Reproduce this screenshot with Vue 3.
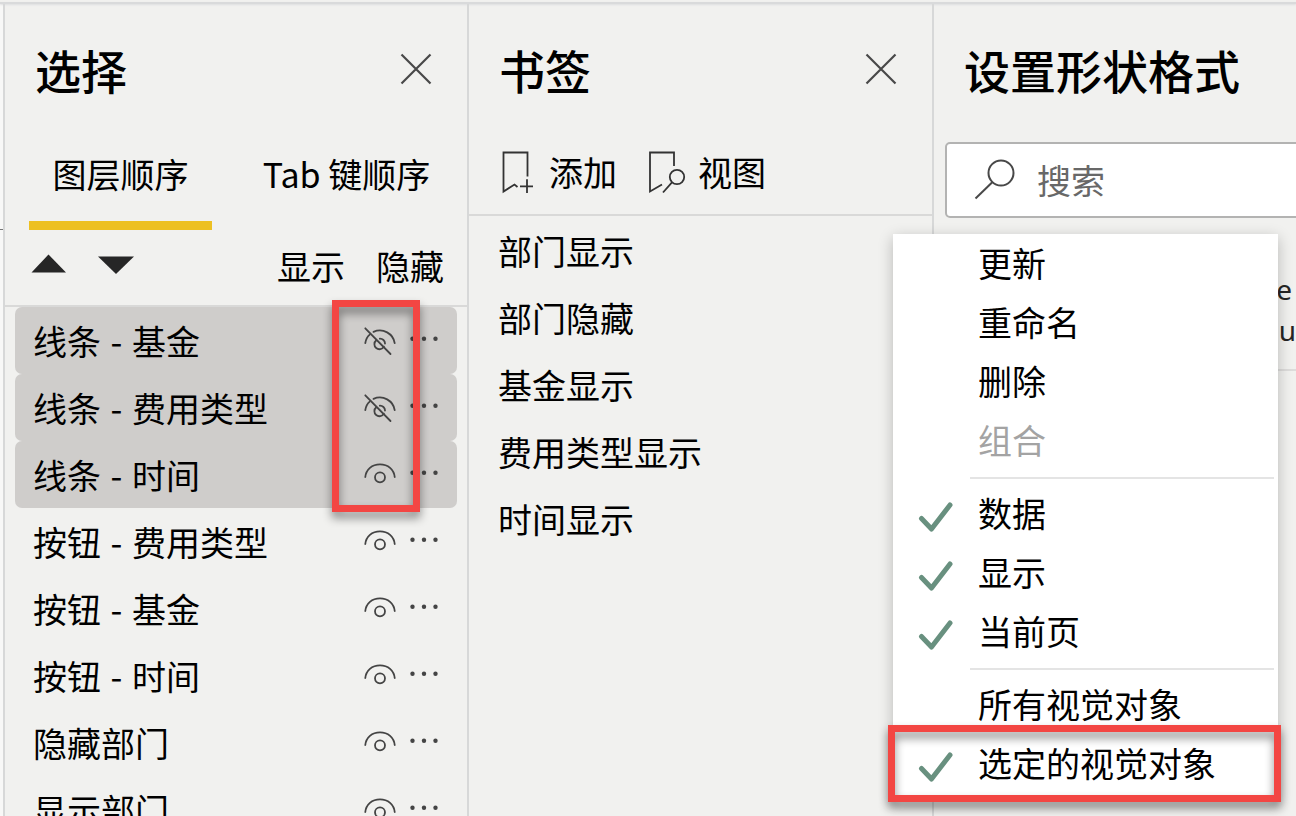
<script setup>
import { ref } from 'vue'

const layers = ref([
  { name: ['线条', '基金'], selected: true, hidden: true },
  { name: ['线条', '费用类型'], selected: true, hidden: true },
  { name: ['线条', '时间'], selected: true, hidden: false },
  { name: ['按钮', '费用类型'], selected: false, hidden: false },
  { name: ['按钮', '基金'], selected: false, hidden: false },
  { name: ['按钮', '时间'], selected: false, hidden: false },
  { name: ['隐藏部门'], selected: false, hidden: false },
  { name: ['显示部门'], selected: false, hidden: false }
])

const bookmarks = ['部门显示', '部门隐藏', '基金显示', '费用类型显示', '时间显示']

const menuGroups = [
  [
    { label: '更新' },
    { label: '重命名' },
    { label: '删除' },
    { label: '组合', disabled: true }
  ],
  [
    { label: '数据', checked: true },
    { label: '显示', checked: true },
    { label: '当前页', checked: true }
  ],
  [
    { label: '所有视觉对象' },
    { label: '选定的视觉对象', checked: true, marked: true }
  ]
]
</script>

<template>
  <div class="app">
    <div class="canvas-edge"><i class="canvas-line"></i></div>

    <section class="panel">
      <header class="panel-head">
        <h2>选择</h2>
        <button class="icon-btn" aria-label="关闭">
          <svg width="32" height="32" viewBox="0 0 32 32"><path d="M1.500 1.500 30.500 30.500M30.500 1.500 1.500 30.500" fill="none" stroke="#484848" stroke-width="2.200" /></svg>
        </button>
      </header>
      <div class="tabs" role="tablist">
        <button class="tab active" role="tab" aria-selected="true">图层顺序</button>
        <button class="tab" role="tab" aria-selected="false">Tab 键顺序</button>
      </div>
      <div class="order-bar">
        <button class="icon-btn" aria-label="上移">
          <svg width="36" height="20" viewBox="0 0 36 20"><path d="M0.500 18.500 17.500 0.500 35 18.500Z" fill="#262626" /></svg>
        </button>
        <button class="icon-btn" aria-label="下移">
          <svg width="36" height="20" viewBox="0 0 36 20"><path d="M0 2.500H36L18 20Z" fill="#262626" /></svg>
        </button>
        <button class="text-btn show-all">显示</button>
        <button class="text-btn">隐藏</button>
      </div>
      <div class="layer-area">
        <ul class="layers">
          <li v-for="layer in layers" :key="layer.name.join('-')" :class="{ selected: layer.selected }">
            <span class="layer-name">{{ layer.name[0] }}<template v-if="layer.name[1]"><span class="dash"> - </span>{{ layer.name[1] }}</template></span>
            <button class="icon-btn" :aria-label="layer.hidden ? '显示' : '隐藏'" @click="layer.hidden = !layer.hidden">
              <svg width="32" height="32" viewBox="0 0 32 32" fill="none" stroke="#444" stroke-width="1.800" stroke-linecap="round">
                <template v-if="layer.hidden">
                  <path d="M1.300 18.200C1.800 14.500 3.300 11.600 5.700 9.600" />
                  <path d="M9.500 6.800C19 2.800 29.300 8.500 30.700 18.200" />
                  <path d="M12.300 15.300A5 5 0 1 0 19.800 21.600" />
                  <path d="M15.800 13.600A5 5 0 0 1 21 18.600" />
                  <path d="M1.300 3.300 26.500 29" />
                </template>
                <template v-else>
                  <path d="M1.300 18C2 10.500 8 5.300 16 5.300S30 10.500 30.700 18" />
                  <circle cx="16" cy="18.300" r="5" />
                </template>
              </svg>
            </button>
            <button class="icon-btn more" aria-label="更多选项">
              <svg width="28" height="28" viewBox="0 0 28 28" fill="#444"><circle cx="2.500" cy="11.700" r="2.200" /><circle cx="14" cy="11.700" r="2.200" /><circle cx="25.500" cy="11.700" r="2.200" /></svg>
            </button>
          </li>
        </ul>
        <div class="callout eyes-callout"></div>
      </div>
    </section>

    <section class="panel">
      <header class="panel-head">
        <h2>书签</h2>
        <button class="icon-btn" aria-label="关闭">
          <svg width="32" height="32" viewBox="0 0 32 32"><path d="M1.500 1.500 30.500 30.500M30.500 1.500 1.500 30.500" fill="none" stroke="#484848" stroke-width="2.200" /></svg>
        </button>
      </header>
      <div class="bookmark-bar">
        <button class="text-btn">
          <svg width="34" height="44" viewBox="0 0 34 44" fill="none" stroke="#333" stroke-width="1.800"><path d="M26.500 26.500V2.500H2.500V41.500L13.500 34.500 16.500 37M19 36.300H32M26 29.300V43" /></svg>
          <span>添加</span>
        </button>
        <button class="text-btn view">
          <svg width="38" height="44" viewBox="0 0 38 44" fill="none" stroke="#333" stroke-width="1.800"><path d="M26 16V2.500H2V41.500L14 34.500M24.200 32.200 15 42.500" /><circle cx="29" cy="27" r="7.200" /></svg>
          <span>视图</span>
        </button>
      </div>
      <ul class="bookmarks">
        <li v-for="name in bookmarks" :key="name">{{ name }}</li>
      </ul>
    </section>

    <section class="panel format">
      <header class="panel-head">
        <h2>设置形状格式</h2>
      </header>
      <label class="search">
        <svg width="42" height="42" viewBox="0 0 42 42" fill="none" stroke="#484848" stroke-width="2"><circle cx="27" cy="15" r="12.500" /><path d="M18.500 24 1.500 40.500" /></svg>
        <input type="search" placeholder="搜索" aria-label="搜索" />
      </label>
      <p class="behind"><span>e</span><span>u</span></p>

      <div class="menu" role="menu">
        <div v-for="(group, g) in menuGroups" :key="g" class="group">
          <button
            v-for="item in group"
            :key="item.label"
            class="menu-item"
            role="menuitem"
            :disabled="item.disabled"
          >
            <span class="tick">
              <svg v-if="item.checked" width="36" height="32" viewBox="0 0 36 32"><path d="M3.500 17.500 13.500 28 32 4" fill="none" stroke="#68907f" stroke-width="5" stroke-linecap="round" stroke-linejoin="round" /></svg>
            </span>
            <span>{{ item.label }}</span>
            <i v-if="item.marked" class="callout item-callout"></i>
          </button>
        </div>
      </div>
    </section>
  </div>
</template>

<style>
body {
  margin: 0;
  background: #f1f1ef;
}
</style>

<style scoped>
* {
  box-sizing: border-box;
}

.app {
  display: grid;
  grid-template-columns: 3px minmax(0, 464fr) minmax(0, 465fr) minmax(0, 364fr);
  height: 100vh;
  padding-top: 4px;
  overflow: hidden;
  position: relative;
  background: #f1f1ef;
  color: #000;
  font-family: "Noto Sans CJK SC", sans-serif;
  font-size: 34px;
  line-height: 48px;
}

.app::before {
  content: "";
  position: absolute;
  top: 2px;
  left: 0;
  right: 0;
  height: 2px;
  background: #d9dadb;
  box-shadow: 0 1px 2px #dddedf;
}

.canvas-edge {
  background: #f8f8f7;
}

.canvas-line {
  display: block;
  margin-top: 225px;
  height: 1px;
  background: #777;
}

.panel {
  border-left: 2px solid #d7d8d8;
  position: relative;
  min-width: 0;
}

button {
  border: 0;
  padding: 0;
  margin: 0;
  background: none;
  color: inherit;
  font: inherit;
  text-align: left;
  cursor: pointer;
}

svg {
  display: block;
  flex: none;
}

ul {
  list-style: none;
  margin: 0;
  padding: 0;
}

.panel-head {
  display: flex;
  align-items: center;
  justify-content: space-between;
  height: 133px;
  padding: 0 35px 4px 30px;
}

h2 {
  margin: 0;
  font-size: 46px;
  font-weight: 500;
  line-height: 64px;
  white-space: nowrap;
}

.tabs {
  display: flex;
  justify-content: space-between;
  padding: 0 29px 0 24px;
}

.tab {
  width: 183px;
  padding-bottom: 10px;
  border-bottom: 9px solid transparent;
  line-height: 74px;
  text-align: center;
  white-space: nowrap;
}

.tab.active {
  border-bottom-color: #edc022;
}

.order-bar {
  display: flex;
  align-items: center;
  height: 77px;
  padding: 0 23px 4px 26px;
  gap: 31px;
  border-bottom: 2px solid #d9d9d8;
}

.order-bar .icon-btn {
  padding-bottom: 4px;
}

.show-all {
  margin-left: auto;
}

.layer-area {
  position: relative;
}

.layers {
  margin: 0 10px;
}

.layers li {
  display: flex;
  align-items: center;
  height: 67px;
  padding: 0 19px 0 18px;
  border-radius: 7px;
}

.layers li.selected {
  background: #cfcdcb;
}

.layer-name {
  flex: 1;
  white-space: pre;
}

.dash {
  padding: 0 2px;
}

.more {
  margin-left: 14px;
}

.callout {
  position: absolute;
  border: 7px solid #f34643;
  filter: drop-shadow(0 6px 5px rgba(0, 0, 0, 0.45));
  pointer-events: none;
}

.eyes-callout {
  top: -7px;
  right: 47px;
  width: 88px;
  height: 212px;
}

.bookmark-bar {
  display: flex;
  align-items: center;
  height: 79px;
  padding: 0 31px 7px 32px;
  gap: 31px;
  border-bottom: 2px solid #d9d9d8;
}

.text-btn {
  display: flex;
  align-items: center;
  gap: 14px;
  white-space: nowrap;
}

.view {
  gap: 12px;
}

.bookmarks {
  padding-top: 1px;
}

.bookmarks li {
  padding: 0 29px;
  line-height: 67px;
}

.search {
  display: flex;
  align-items: center;
  height: 76px;
  margin: 5px -8px 0 11px;
  padding-left: 27px;
  border: 2px solid #b3b3b2;
  border-radius: 5px;
  background: #fff;
}

.search svg {
  margin-bottom: 2px;
}

.search input {
  flex: 1;
  min-width: 0;
  height: 48px;
  margin-left: 21px;
  padding: 0;
  border: 0;
  outline: 0;
  background: transparent;
  font: inherit;
}

.search input::placeholder {
  color: #686868;
  opacity: 1;
}

.behind {
  display: flex;
  flex-direction: column;
  align-items: flex-end;
  margin: 0;
  padding: 51px 0 18px;
  border-bottom: 2px solid #dddcdb;
  color: #252525;
  font-family: "Noto Sans", sans-serif;
  font-size: 28px;
  line-height: 41px;
}

.behind span:first-child {
  padding-right: 4px;
}

.menu {
  position: absolute;
  z-index: 1;
  top: 230px;
  left: -41px;
  right: 18px;
  padding: 1px 0 3px;
  background: #fff;
  box-shadow: 0 4px 14px rgba(0, 0, 0, 0.24);
}

.group + .group::before {
  content: "";
  display: block;
  height: 2px;
  margin: 6px 4px 6px 77px;
  background: #e4e4e4;
}

.menu-item {
  position: relative;
  display: flex;
  align-items: center;
  width: 100%;
  height: 59px;
  padding-bottom: 4px;
  white-space: nowrap;
}

.menu-item:disabled {
  color: #a3a3a3;
  cursor: default;
}

.tick {
  width: 85px;
  padding: 8px 0 0 25px;
}

.item-callout {
  top: -10px;
  left: -5px;
  right: -3px;
  height: 77px;
}
</style>
